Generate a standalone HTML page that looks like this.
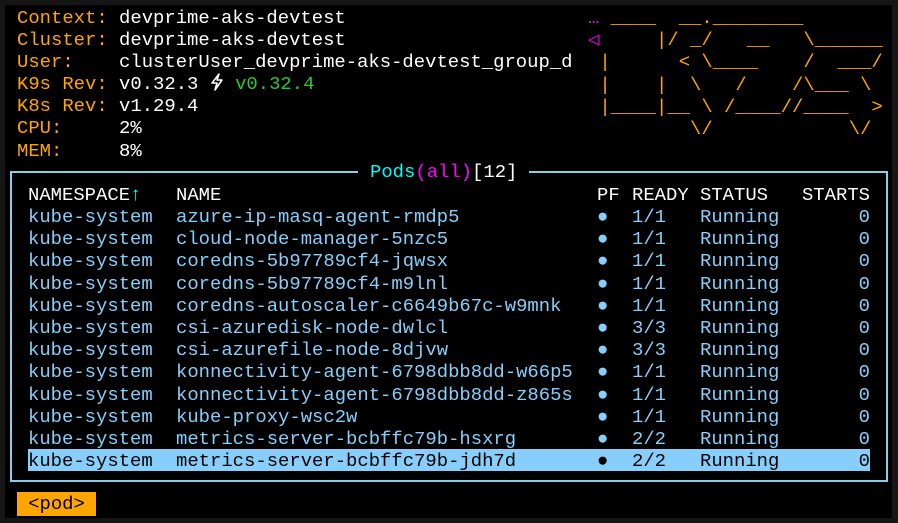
<!DOCTYPE html>
<html><head><meta charset="utf-8"><style>
html,body{margin:0;padding:0;background:#000;}
body{width:898px;height:523px;position:relative;overflow:hidden;font-family:"Liberation Mono",monospace;font-size:18.9px;line-height:22.2px;color:#fff;}
.frame{position:absolute;left:0;top:0;width:898px;height:523px;box-sizing:border-box;border:5px solid #161616;border-right-width:6px;}
.l{position:absolute;white-space:pre;}
.o{color:#ffa500}
.g{color:#2ec82e}
.logo{position:absolute;left:588px;top:7px;color:#ffa500;white-space:pre;}
.m{color:#ff00ff}
.box{position:absolute;left:10px;top:171px;width:878px;height:311px;box-sizing:border-box;border:2px solid #87ceeb;}
.title{position:absolute;left:358px;top:161px;background:#000;padding:0 12px;white-space:pre;}
.row{position:absolute;left:28px;width:842px;height:22.2px;color:#87cefa;}
.row span{position:absolute;top:1px;white-space:pre;}
.hdr{color:#fff}
.sel{background:#87cefa;color:#000;}
.pod{position:absolute;left:17px;top:492px;width:79px;height:24px;background:#ffa500;color:#000;text-align:center;line-height:24px;}
</style></head><body>
<div class="frame"></div>
<div class="l" style="left:17px;top:7px"><span class="o">Context: </span>devprime-aks-devtest</div>
<div class="l" style="left:17px;top:29px"><span class="o">Cluster: </span>devprime-aks-devtest</div>
<div class="l" style="left:17px;top:51px"><span class="o">User:    </span>clusterUser_devprime-aks-devtest_group_d</div>
<div class="l" style="left:17px;top:73px"><span class="o">K9s Rev: </span>v0.32.3 <svg width="14" height="18" viewBox="0 0 14 18" style="vertical-align:-2px"><path d="M9 1 L2 10 L7 10 L5 17 L12 7 L7 7 Z" fill="none" stroke="#fff" stroke-width="1.6" stroke-linejoin="round"/></svg> <span class="g">v0.32.4</span></div>
<div class="l" style="left:17px;top:95px"><span class="o">K8s Rev: </span>v1.29.4</div>
<div class="l" style="left:17px;top:117px"><span class="o">CPU:     </span>2%</div>
<div class="l" style="left:17px;top:140px"><span class="o">MEM:     </span>8%</div>
<div class="logo"><span class="m">…</span> ____  __.________
<span class="m">◁</span>     |/ _/   __   \______
 |      &lt; \____    /  ___/
 |    |  \   /    /\___ \
 |____|__ \ /____//____  &gt;
         \/            \/</div>
<div class="box"></div>
<div class="title"><span style="color:#00ffff">Pods</span><span class="m">(all)</span>[12]</div>
<div class="row hdr" style="top:183px"><span style="left:0">NAMESPACE<span style="position:static;color:#00ffff">↑</span></span><span style="left:148px">NAME</span><span style="left:569px">PF</span><span style="left:604px">READY</span><span style="left:672px">STATUS</span><span style="right:0">STARTS</span></div>
<div class="row" style="top:205px"><span style="left:0">kube-system</span><span style="left:148px">azure-ip-masq-agent-rmdp5</span><span style="left:569px">●</span><span style="left:604px">1/1</span><span style="left:672px">Running</span><span style="right:0">0</span></div>
<div class="row" style="top:227px"><span style="left:0">kube-system</span><span style="left:148px">cloud-node-manager-5nzc5</span><span style="left:569px">●</span><span style="left:604px">1/1</span><span style="left:672px">Running</span><span style="right:0">0</span></div>
<div class="row" style="top:249px"><span style="left:0">kube-system</span><span style="left:148px">coredns-5b97789cf4-jqwsx</span><span style="left:569px">●</span><span style="left:604px">1/1</span><span style="left:672px">Running</span><span style="right:0">0</span></div>
<div class="row" style="top:272px"><span style="left:0">kube-system</span><span style="left:148px">coredns-5b97789cf4-m9lnl</span><span style="left:569px">●</span><span style="left:604px">1/1</span><span style="left:672px">Running</span><span style="right:0">0</span></div>
<div class="row" style="top:294px"><span style="left:0">kube-system</span><span style="left:148px">coredns-autoscaler-c6649b67c-w9mnk</span><span style="left:569px">●</span><span style="left:604px">1/1</span><span style="left:672px">Running</span><span style="right:0">0</span></div>
<div class="row" style="top:316px"><span style="left:0">kube-system</span><span style="left:148px">csi-azuredisk-node-dwlcl</span><span style="left:569px">●</span><span style="left:604px">3/3</span><span style="left:672px">Running</span><span style="right:0">0</span></div>
<div class="row" style="top:338px"><span style="left:0">kube-system</span><span style="left:148px">csi-azurefile-node-8djvw</span><span style="left:569px">●</span><span style="left:604px">3/3</span><span style="left:672px">Running</span><span style="right:0">0</span></div>
<div class="row" style="top:360px"><span style="left:0">kube-system</span><span style="left:148px">konnectivity-agent-6798dbb8dd-w66p5</span><span style="left:569px">●</span><span style="left:604px">1/1</span><span style="left:672px">Running</span><span style="right:0">0</span></div>
<div class="row" style="top:383px"><span style="left:0">kube-system</span><span style="left:148px">konnectivity-agent-6798dbb8dd-z865s</span><span style="left:569px">●</span><span style="left:604px">1/1</span><span style="left:672px">Running</span><span style="right:0">0</span></div>
<div class="row" style="top:405px"><span style="left:0">kube-system</span><span style="left:148px">kube-proxy-wsc2w</span><span style="left:569px">●</span><span style="left:604px">1/1</span><span style="left:672px">Running</span><span style="right:0">0</span></div>
<div class="row" style="top:427px"><span style="left:0">kube-system</span><span style="left:148px">metrics-server-bcbffc79b-hsxrg</span><span style="left:569px">●</span><span style="left:604px">2/2</span><span style="left:672px">Running</span><span style="right:0">0</span></div>
<div class="row sel" style="top:449px"><span style="left:0">kube-system</span><span style="left:148px">metrics-server-bcbffc79b-jdh7d</span><span style="left:569px">●</span><span style="left:604px">2/2</span><span style="left:672px">Running</span><span style="right:0">0</span></div>
<div class="pod">&lt;pod&gt;</div>
</body></html>
